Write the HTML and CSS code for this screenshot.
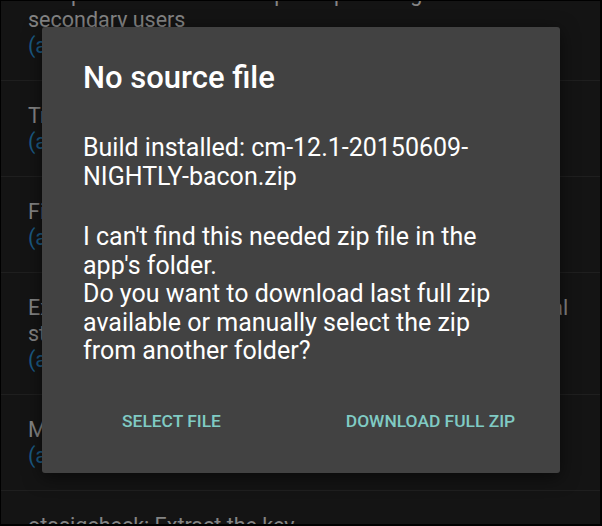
FILE: index.html
```html
<!DOCTYPE html>
<html>
<head>
<meta charset="utf-8">
<link rel="stylesheet" href="styles.css">
</head>
<body>
<div class="screen">
  <div class="list">
    <div class="item">
      <div class="title">Setup wizard: Ensure setup complete flags are set for<br>secondary users</div>
      <div class="meta">(aosp-review: merged change)</div>
    </div>
    <div class="item">
      <div class="title">Translations: Update strings from Crowdin</div>
      <div class="meta">(android_packages_apps)</div>
    </div>
    <div class="item">
      <div class="title">Fix crash when tapping notification</div>
      <div class="meta">(android_frameworks_base)</div>
    </div>
    <div class="item">
      <div class="title">Exynos: Add support to reading its new values of internal<br>storage partitions</div>
      <div class="meta">(android_device_samsung)</div>
    </div>
    <div class="item">
      <div class="title">MediaProvider: fix thumbnails</div>
      <div class="meta">(android_packages_providers)</div>
    </div>
    <div class="item">
      <div class="title">otasigcheck: Extract the key</div>
      <div class="meta">(android_bootable_recovery)</div>
    </div>
  </div>

  <div class="dialog">
    <h1 class="dialog-title">No source file</h1>
    <p class="dialog-text">Build installed: cm-12.1-20150609-<br>NIGHTLY-bacon.zip</p>
    <p class="dialog-text gap">I can't find this needed zip file in the<br>app's folder.<br>Do you want to download last full zip<br>available or manually select the zip<br>from another folder?</p>
    <div class="actions">
      <div class="action">SELECT FILE</div>
      <div class="action">DOWNLOAD FULL ZIP</div>
    </div>
  </div>
</div>
</body>
</html>
```

FILE: styles.css
```css
html, body {
  margin: 0;
  padding: 0;
  background: #000;
}

.screen {
  position: relative;
  width: 602px;
  height: 526px;
  box-sizing: border-box;
  border: 2px solid #000;
  border-width: 1px 2px 2px 1px;
  background: #141414;
  overflow: hidden;
  font-family: Roboto, "Noto Sans", sans-serif;
}

.list {
  margin-top: -41px;
}

.item {
  padding: 21.5px 0 21.5px 27px;
  border-bottom: 1px solid #1f1f1f;
  font-size: 21.5px;
  line-height: 26px;
  white-space: nowrap;
}

.item:first-child {
  padding-top: 20.5px;
}

.title {
  color: #848484;
}

.meta {
  color: #1b5a84;
}

.dialog {
  position: absolute;
  left: 41px;
  top: 26px;
  width: 518px;
  height: 446px;
  box-sizing: border-box;
  padding: 35px 40px 0 41px;
  background: #424242;
  border-radius: 3px;
  box-shadow: 0 4px 18px rgba(0, 0, 0, 0.55);
  color: #fff;
}

.dialog-title {
  margin: 0;
  font-size: 31px;
  line-height: 32px;
  font-weight: 500;
}

.dialog-text {
  margin: 40px 0 0;
  font-size: 25px;
  line-height: 28.5px;
}

.dialog-text.gap {
  margin-top: 32px;
}

.actions {
  display: flex;
  margin: 31px -40px 0 -41px;
}

.action {
  flex: 1;
  text-align: center;
  height: 48px;
  line-height: 48px;
  font-size: 17.4px;
  font-weight: 500;
  color: #80cbc4;
}
```
